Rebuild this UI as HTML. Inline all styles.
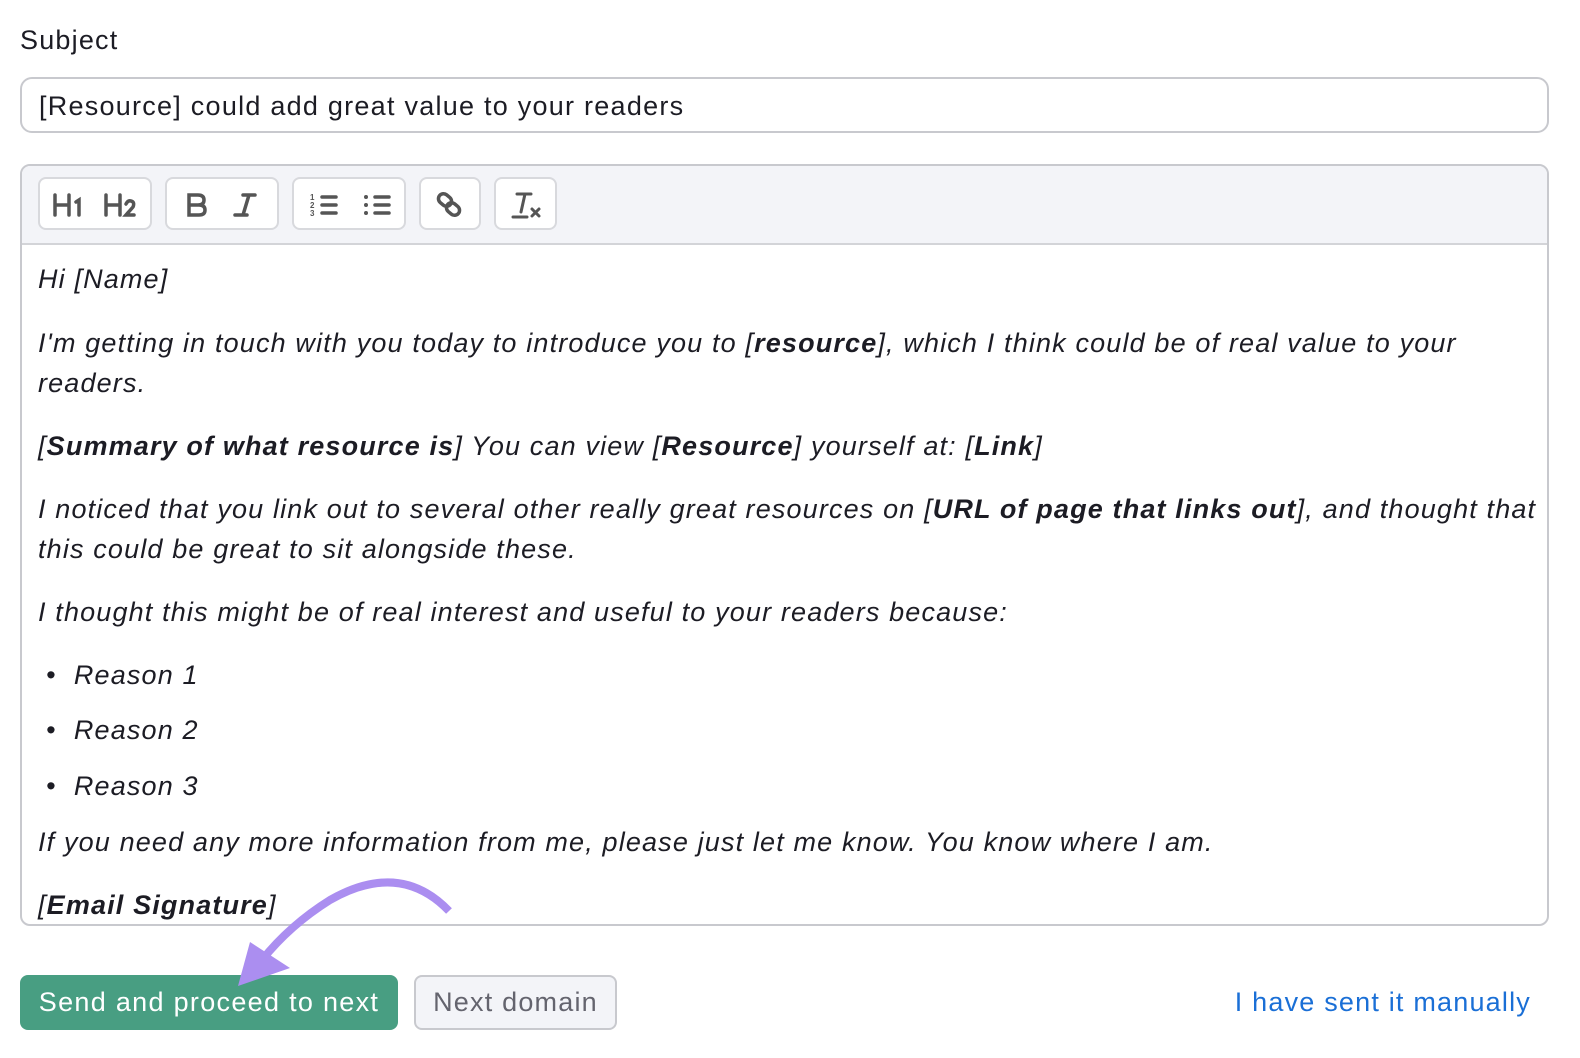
<!DOCTYPE html><html><head><style>
body{margin:0;width:1580px;height:1058px;background:#fff;font-family:"Liberation Sans",sans-serif;color:#1c1c24;position:relative;overflow:hidden}
.a{position:absolute}
.lbl{left:20px;top:25px;font-size:27px;letter-spacing:1.2px}
.inp{left:20px;top:77px;height:52px;border:2px solid #c8c9ce;border-radius:12px;font-size:27px;line-height:54px;padding-left:17px;width:1508px;letter-spacing:1.25px}
.ed{left:20px;top:164px;width:1525px;height:758px;border:2px solid #c8c9ce;border-radius:10px;overflow:hidden}
.tb{height:77px;background:#f3f4f8;border-bottom:2px solid #d3d4d8;position:relative}
.bt{position:absolute;top:11px;height:53px;border:2px solid #d8d9dd;border-radius:8px;background:#fff;box-sizing:border-box}
.tx{position:absolute;left:38px;font-size:27px;font-style:italic;line-height:39.5px;white-space:nowrap;letter-spacing:1.15px}
b{font-weight:bold}
.g{left:20px;top:975px;width:378px;height:55px;background:#489e82;border-radius:8px;color:#fff;font-size:27px;line-height:55px;text-align:center;letter-spacing:1.3px}
.n{left:414px;top:975px;width:203px;height:55px;box-sizing:border-box;border:2px solid #c8c9ce;background:#f3f4f8;border-radius:8px;color:#64646e;font-size:27px;line-height:51px;text-align:center;letter-spacing:1.2px}
.l{right:49px;top:975px;line-height:55px;font-size:27px;color:#1a6fd6;letter-spacing:1.2px}
</style></head><body>
<div class="a lbl">Subject</div>
<div class="a inp">[Resource] could add great value to your readers</div>
<div class="a ed">
<div class="tb">
<div class="bt" style="left:16px;width:114px"><svg width="114" height="53" viewBox="0 0 114 53"><g fill="none" stroke="#555" stroke-width="3.5" stroke-linecap="round"><path d="M15 16v20M15 26h14M29 16v20M36 23l3-2v15M66 16v20M66 26h14M80 16v20M86 25q2-4 5-3q4 1 2 6l-7 8h8"/></g></svg></div>
<div class="bt" style="left:143px;width:114px"><svg width="114" height="53" viewBox="0 0 114 53"><g fill="none" stroke="#555" stroke-width="3.5" stroke-linecap="round"><path d="M22 16h9q6 0 6 5t-6 5h-9zM22 26h10q6 0 6 5t-6 5h-10zM22 16v20M76 16h12M68 36h12M82 16l-6 20"/></g></svg></div>
<div class="bt" style="left:270px;width:114px"><svg width="114" height="53" viewBox="0 0 114 53"><g fill="none" stroke="#555" stroke-width="3.5" stroke-linecap="round"><path d="M28 18h14M28 26h14M28 34h14M81 18h14M81 26h14M81 34h14"/></g><g fill="#555" font-size="8" font-family="Liberation Sans" font-weight="bold"><text x="16" y="21">1</text><text x="16" y="29">2</text><text x="16" y="37">3</text></g><g fill="#555"><circle cx="72" cy="18" r="2"/><circle cx="72" cy="26" r="2"/><circle cx="72" cy="34" r="2"/></g></svg></div>
<div class="bt" style="left:397px;width:62px"><svg width="62" height="53" viewBox="0 0 62 53"><g fill="none" stroke="#555" stroke-width="3.5"><rect x="17" y="16" width="14" height="10" rx="5" transform="rotate(40 24 21)"/><rect x="25" y="25" width="14" height="10" rx="5" transform="rotate(40 32 30)"/></g></svg></div>
<div class="bt" style="left:472px;width:63px"><svg width="63" height="53" viewBox="0 0 63 53"><g fill="none" stroke="#555" stroke-width="3" stroke-linecap="round"><path d="M21 15h14M29 15l-4 18M17 38h14M36 30l7 7M43 30l-7 7"/></g></svg></div>
</div>
</div>
<div class="tx a" style="top:260px">Hi [Name]</div>
<div class="tx a" style="top:324px">I'm getting in touch with you today to introduce you to [<b>resource</b>], which I think could be of real value to your<br>readers.</div>
<div class="tx a" style="top:427px">[<b>Summary of what resource is</b>] You can view [<b>Resource</b>] yourself at: [<b>Link</b>]</div>
<div class="tx a" style="top:490px">I noticed that you link out to several other really great resources on [<b>URL of page that links out</b>], and thought that<br>this could be great to sit alongside these.</div>
<div class="tx a" style="top:593px">I thought this might be of real interest and useful to your readers because:</div>
<div class="tx a" style="top:656px;left:46px">•&nbsp;&nbsp;Reason 1</div>
<div class="tx a" style="top:711px;left:46px">•&nbsp;&nbsp;Reason 2</div>
<div class="tx a" style="top:767px;left:46px">•&nbsp;&nbsp;Reason 3</div>
<div class="tx a" style="top:823px">If you need any more information from me, please just let me know. You know where I am.</div>
<div class="tx a" style="top:886px">[<b>Email Signature</b>]</div>
<div class="a g">Send and proceed to next</div>
<div class="a n">Next domain</div>
<div class="a l">I have sent it manually</div>
<svg class="a" style="left:0;top:0" width="1580" height="1058"><path d="M449 911Q400 860 330 900Q290 925 262 960" fill="none" stroke="#ab8ef0" stroke-width="8" stroke-linecap="butt"/><path d="M238 986L250 942L290 968Z" fill="#ab8ef0"/></svg>
</body></html>
